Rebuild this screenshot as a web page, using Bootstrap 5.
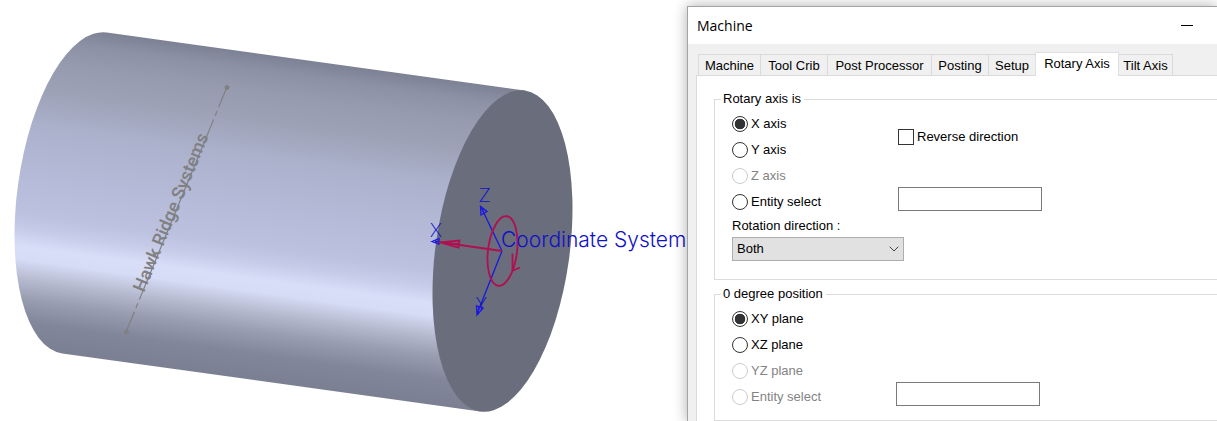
<!DOCTYPE html>
<html lang="en">
<head>
<meta charset="utf-8">
<meta name="viewport" content="width=device-width, initial-scale=1">
<title>Machine</title>
<link href="https://cdn.jsdelivr.net/npm/bootstrap@5.3.0/dist/css/bootstrap.min.css" rel="stylesheet">
<style>
body{background:#fff;color:#000;font:13px/16px "Liberation Sans",Arial,sans-serif}
.viewport3d{flex:0 0 687px;min-width:0}
.viewport3d svg{display:block;overflow:visible}
.dialog-wrap{flex:1 1 0;min-width:0;padding-top:6px}
.dlg{border:solid #a3a3a3;border-width:1px 0 0 1px;background:#f0f0f0;box-shadow:0 0 13px rgba(0,0,0,.32);flex:1 1 auto}
.titlebar{background:#fff;height:37px;padding:0 24px 0 9px}
.titlebar h1{font:14px/18px "Open Sans","Noto Sans",sans-serif;margin:0}
.minimize{border:0;background:none;padding:0;width:12px;height:20px;display:block}
.tabs{padding:8px 0 0 11px;align-items:flex-end;border:0;flex-wrap:nowrap}
.tabs .nav-link{border:1px solid #dadada;border-bottom:0;border-radius:0;background:#f0f0f0;color:#000;padding:3px 0 2px;height:21px;margin:0 0 0 -1px;text-align:center;white-space:nowrap}
.tabs .nav-link.active{background:#fff;color:#000;height:24px;padding-bottom:5px;margin-bottom:-1px;position:relative}
.w-a{width:63px}.w-b{width:68px}.w-c{width:105px}.w-d{width:58px}.w-e{width:48px}.w-f{width:84px}.w-g{width:55px}
.panel{background:#fff;border:solid #dadada;border-width:1px 0 0 1px;margin-left:8px;padding:15px 0 1px 17px;flex:1 1 auto}
.group{border:1px solid #dcdcdc;border-right:0;padding:4px 0 0 17px;margin:0;min-width:0}
.group legend{float:none;width:auto;font-size:13px;line-height:16px;padding:0 3px 0 2px;margin:0 0 0 -11px}
.first{margin-bottom:6px}
.second{padding-bottom:10px}
.opt{display:flex;align-items:center;gap:3px;height:26px;margin:0;padding:0;min-height:0}
.opt .form-check-input{float:none;margin:0;width:16px;height:16px;border:1px solid #333;background-color:#fff;flex:none;opacity:1;box-shadow:none}
.opt .form-check-input[type=radio]:checked{background-image:radial-gradient(circle,#333 0 5px,transparent 5.6px)}
.opt .form-check-input:disabled{border-color:#ccc}
.opt .form-check-input:disabled~label{opacity:1;color:#838383}
.options{width:166px;flex:none}
.second .options{width:164px}
.side{padding:13px 0 4px}
.entity{width:144px;height:24px;border:1px solid #7a7a7a;border-radius:0;padding:2px 4px;background:#fff!important}
.second .entity{margin-bottom:4px}
.dir-label{display:block;margin:3px 0}
.direction{width:172px;height:24px;border:1px solid #adadad;border-radius:0;background-color:#e1e1e1;padding:0 24px 0 4px;margin-bottom:18px;font-size:13px;line-height:20px;color:#000;
background-image:url("data:image/svg+xml,%3Csvg xmlns='http://www.w3.org/2000/svg' viewBox='0 0 10 6'%3E%3Cpath d='M.7.7 5 5 9.3.7' fill='none' stroke='%23444' stroke-width='1'/%3E%3C/svg%3E");background-size:10px 6px;background-position:right 4px center}
</style>
</head>
<body>
<div class="d-flex min-vh-100 overflow-hidden">
<main class="viewport3d">
<svg width="687" height="421" viewBox="0 0 687 421" role="img" aria-label="Cylinder with rotary axis">
<defs>
<linearGradient id="steel" x1="0" y1="-162" x2="0" y2="162" gradientUnits="userSpaceOnUse">
<stop offset="0" stop-color="#7d8194"/><stop offset=".05" stop-color="#8c91a5"/><stop offset=".12" stop-color="#969bb0"/><stop offset=".2" stop-color="#9ca1b6"/><stop offset=".31" stop-color="#abb0cb"/><stop offset=".42" stop-color="#b2b7d4"/><stop offset=".59" stop-color="#bbc1df"/><stop offset=".64" stop-color="#c7cce9"/><stop offset=".69" stop-color="#d8ddf8"/><stop offset=".73" stop-color="#d6dbf6"/><stop offset=".79" stop-color="#b5bacf"/><stop offset=".85" stop-color="#989db0"/><stop offset=".92" stop-color="#82869a"/><stop offset="1" stop-color="#7b7f92"/>
</linearGradient>
</defs>
<g transform="translate(502.5 251) rotate(7.9)">
<path d="M0-162H-422A67 162 0 0 0-422 162H0Z" fill="url(#steel)"/>
<ellipse rx="67" ry="162" fill="#6a6d7c"/>
</g>
<g stroke="#808080" fill="#808080">
<path d="M126 332 227 87" fill="none" stroke-width="1.200" stroke-dasharray="22 4 5 4 195 4 5 4 22"/>
<circle cx="126.500" cy="332" r="2"/><circle cx="227" cy="87.500" r="2"/>
</g>
<text transform="translate(144 293) rotate(-67.500)" font-family="Roboto,sans-serif" font-weight="500" font-size="18" fill="#808080">Hawk Ridge Systems</text>
<g fill="none" stroke="#1818e0" stroke-width="1.300">
<path d="M502 251 481 207M480.500 206.500 481 215 487 211.500ZM484 213 482 208M502 251 477 314M477 315 476.500 306 483 308ZM479 307 478 312M432 241.500 439 238.500 439 244ZM435 241.500H439"/>
</g>
<g fill="none" stroke="#b0104f" stroke-width="1.800">
<ellipse cx="502.500" cy="251" rx="14.500" ry="35" transform="rotate(7 502.500 251)"/>
<path d="M502 251 439 242M440 242.500 459.500 240.500 458.500 247.500ZM441 243 459 244M512.500 253.500V271M512 271 520 267.500"/>
</g>
<g fill="#1010c8" font-family="Inter,sans-serif" font-weight="300">
<text x="501" y="247" font-size="21">Coordinate System</text>
<g font-family="Lato,sans-serif"><text x="430" y="237" font-size="19">X</text><text x="479" y="202" font-size="19">Z</text><text x="476" y="310" font-size="18">Y</text></g>
</g>
</svg>
</main>
<div class="dialog-wrap d-flex flex-column">
<section class="dlg d-flex flex-column" aria-label="Machine">
<header class="titlebar d-flex align-items-center justify-content-between"><h1>Machine</h1>
<button class="minimize" type="button" aria-label="Minimize"><svg class="d-block" width="12" height="12" viewBox="0 0 12 12"><path d="M0 5.500H12" stroke="#000"/></svg></button></header>
<nav class="nav nav-tabs tabs">
<a class="nav-link w-a" href="#">Machine</a><a class="nav-link w-b" href="#">Tool Crib</a><a class="nav-link w-c" href="#">Post Processor</a><a class="nav-link w-d" href="#">Posting</a><a class="nav-link w-e" href="#">Setup</a><a class="nav-link w-f active" href="#" aria-current="page">Rotary Axis</a><a class="nav-link w-g" href="#">Tilt Axis</a>
</nav>
<form class="panel">
<fieldset class="group first"><legend>Rotary axis is</legend>
<div class="d-flex">
<div class="options">
<div class="opt"><input class="form-check-input" type="radio" name="axis" id="ax" checked><label for="ax">X axis</label></div>
<div class="opt"><input class="form-check-input" type="radio" name="axis" id="ay"><label for="ay">Y axis</label></div>
<div class="opt"><input class="form-check-input" type="radio" name="axis" id="az" disabled><label for="az">Z axis</label></div>
<div class="opt"><input class="form-check-input" type="radio" name="axis" id="ae"><label for="ae">Entity select</label></div>
</div>
<div class="side d-flex flex-column justify-content-between">
<div class="opt"><input class="form-check-input rounded-0" type="checkbox" id="rev"><label for="rev">Reverse direction</label></div>
<input class="entity" type="text" aria-label="Axis entity">
</div>
</div>
<label class="dir-label" for="dir">Rotation direction :</label>
<select class="form-select direction" id="dir"><option>Both</option></select>
</fieldset>
<fieldset class="group second"><legend>0 degree position</legend>
<div class="d-flex align-items-end">
<div class="options">
<div class="opt"><input class="form-check-input" type="radio" name="zero" id="pxy" checked><label for="pxy">XY plane</label></div>
<div class="opt"><input class="form-check-input" type="radio" name="zero" id="pxz"><label for="pxz">XZ plane</label></div>
<div class="opt"><input class="form-check-input" type="radio" name="zero" id="pyz" disabled><label for="pyz">YZ plane</label></div>
<div class="opt"><input class="form-check-input" type="radio" name="zero" id="pe" disabled><label for="pe">Entity select</label></div>
</div>
<input class="entity" type="text" aria-label="Position entity">
</div>
</fieldset>
</form>
</section>
</div>
</div>
<script src="https://cdn.jsdelivr.net/npm/bootstrap@5.3.0/dist/js/bootstrap.bundle.min.js"></script>
</body>
</html>
